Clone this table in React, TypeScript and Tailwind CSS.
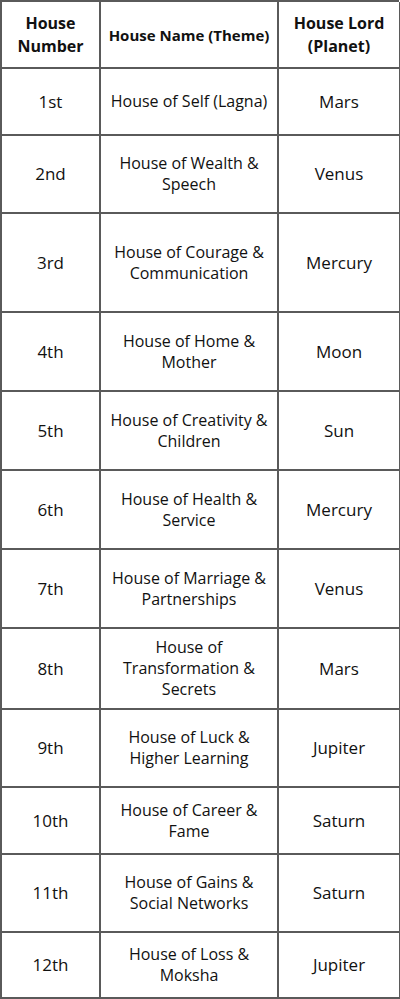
import React from "react";

const rows: { n: string; name: string[]; lord: string; h: number }[] = [
  { n: "1st", name: ["House of Self (Lagna)"], lord: "Mars", h: 67 },
  { n: "2nd", name: ["House of Wealth &", "Speech"], lord: "Venus", h: 78 },
  { n: "3rd", name: ["House of Courage &", "Communication"], lord: "Mercury", h: 99 },
  { n: "4th", name: ["House of Home &", "Mother"], lord: "Moon", h: 79 },
  { n: "5th", name: ["House of Creativity &", "Children"], lord: "Sun", h: 79 },
  { n: "6th", name: ["House of Health &", "Service"], lord: "Mercury", h: 79 },
  { n: "7th", name: ["House of Marriage &", "Partnerships"], lord: "Venus", h: 79 },
  { n: "8th", name: ["House of", "Transformation &", "Secrets"], lord: "Mars", h: 81 },
  { n: "9th", name: ["House of Luck &", "Higher Learning"], lord: "Jupiter", h: 78 },
  { n: "10th", name: ["House of Career &", "Fame"], lord: "Saturn", h: 67 },
  { n: "11th", name: ["House of Gains &", "Social Networks"], lord: "Saturn", h: 78 },
  { n: "12th", name: ["House of Loss &", "Moksha"], lord: "Jupiter", h: 66 },
];

const cell =
  "flex flex-col items-center justify-center text-center border-r-2 border-b-2 border-[#5a5a5a]";

export default function App() {
  return (
    <div
      className="w-[400px] h-[999px] bg-white text-[#111]"
      style={{ fontFamily: '"Open Sans", "Noto Sans", sans-serif' }}
    >
      <div className="grid grid-cols-[99px_178px_122px] border-l-2 border-t-2 border-[#5a5a5a] w-[399px]">
        <div className={`${cell} h-[67px] font-bold text-[16px] leading-[23px]`}>
          <span>House</span>
          <span>Number</span>
        </div>
        <div className={`${cell} h-[67px] font-bold text-[15px] leading-[22px]`}>
          <span className="whitespace-nowrap">House Name (Theme)</span>
        </div>
        <div className={`${cell} h-[67px] font-bold text-[16px] leading-[23px]`}>
          <span>House Lord</span>
          <span>(Planet)</span>
        </div>
        {rows.map((r) => (
          <React.Fragment key={r.n}>
            <div className={`${cell} text-[17px]`} style={{ height: r.h }}>
              {r.n}
            </div>
            <div className={`${cell} text-[16px] leading-[21px]`} style={{ height: r.h }}>
              {r.name.map((l) => (
                <span key={l} className="whitespace-nowrap">
                  {l}
                </span>
              ))}
            </div>
            <div className={`${cell} text-[17px]`} style={{ height: r.h }}>
              {r.lord}
            </div>
          </React.Fragment>
        ))}
      </div>
    </div>
  );
}
